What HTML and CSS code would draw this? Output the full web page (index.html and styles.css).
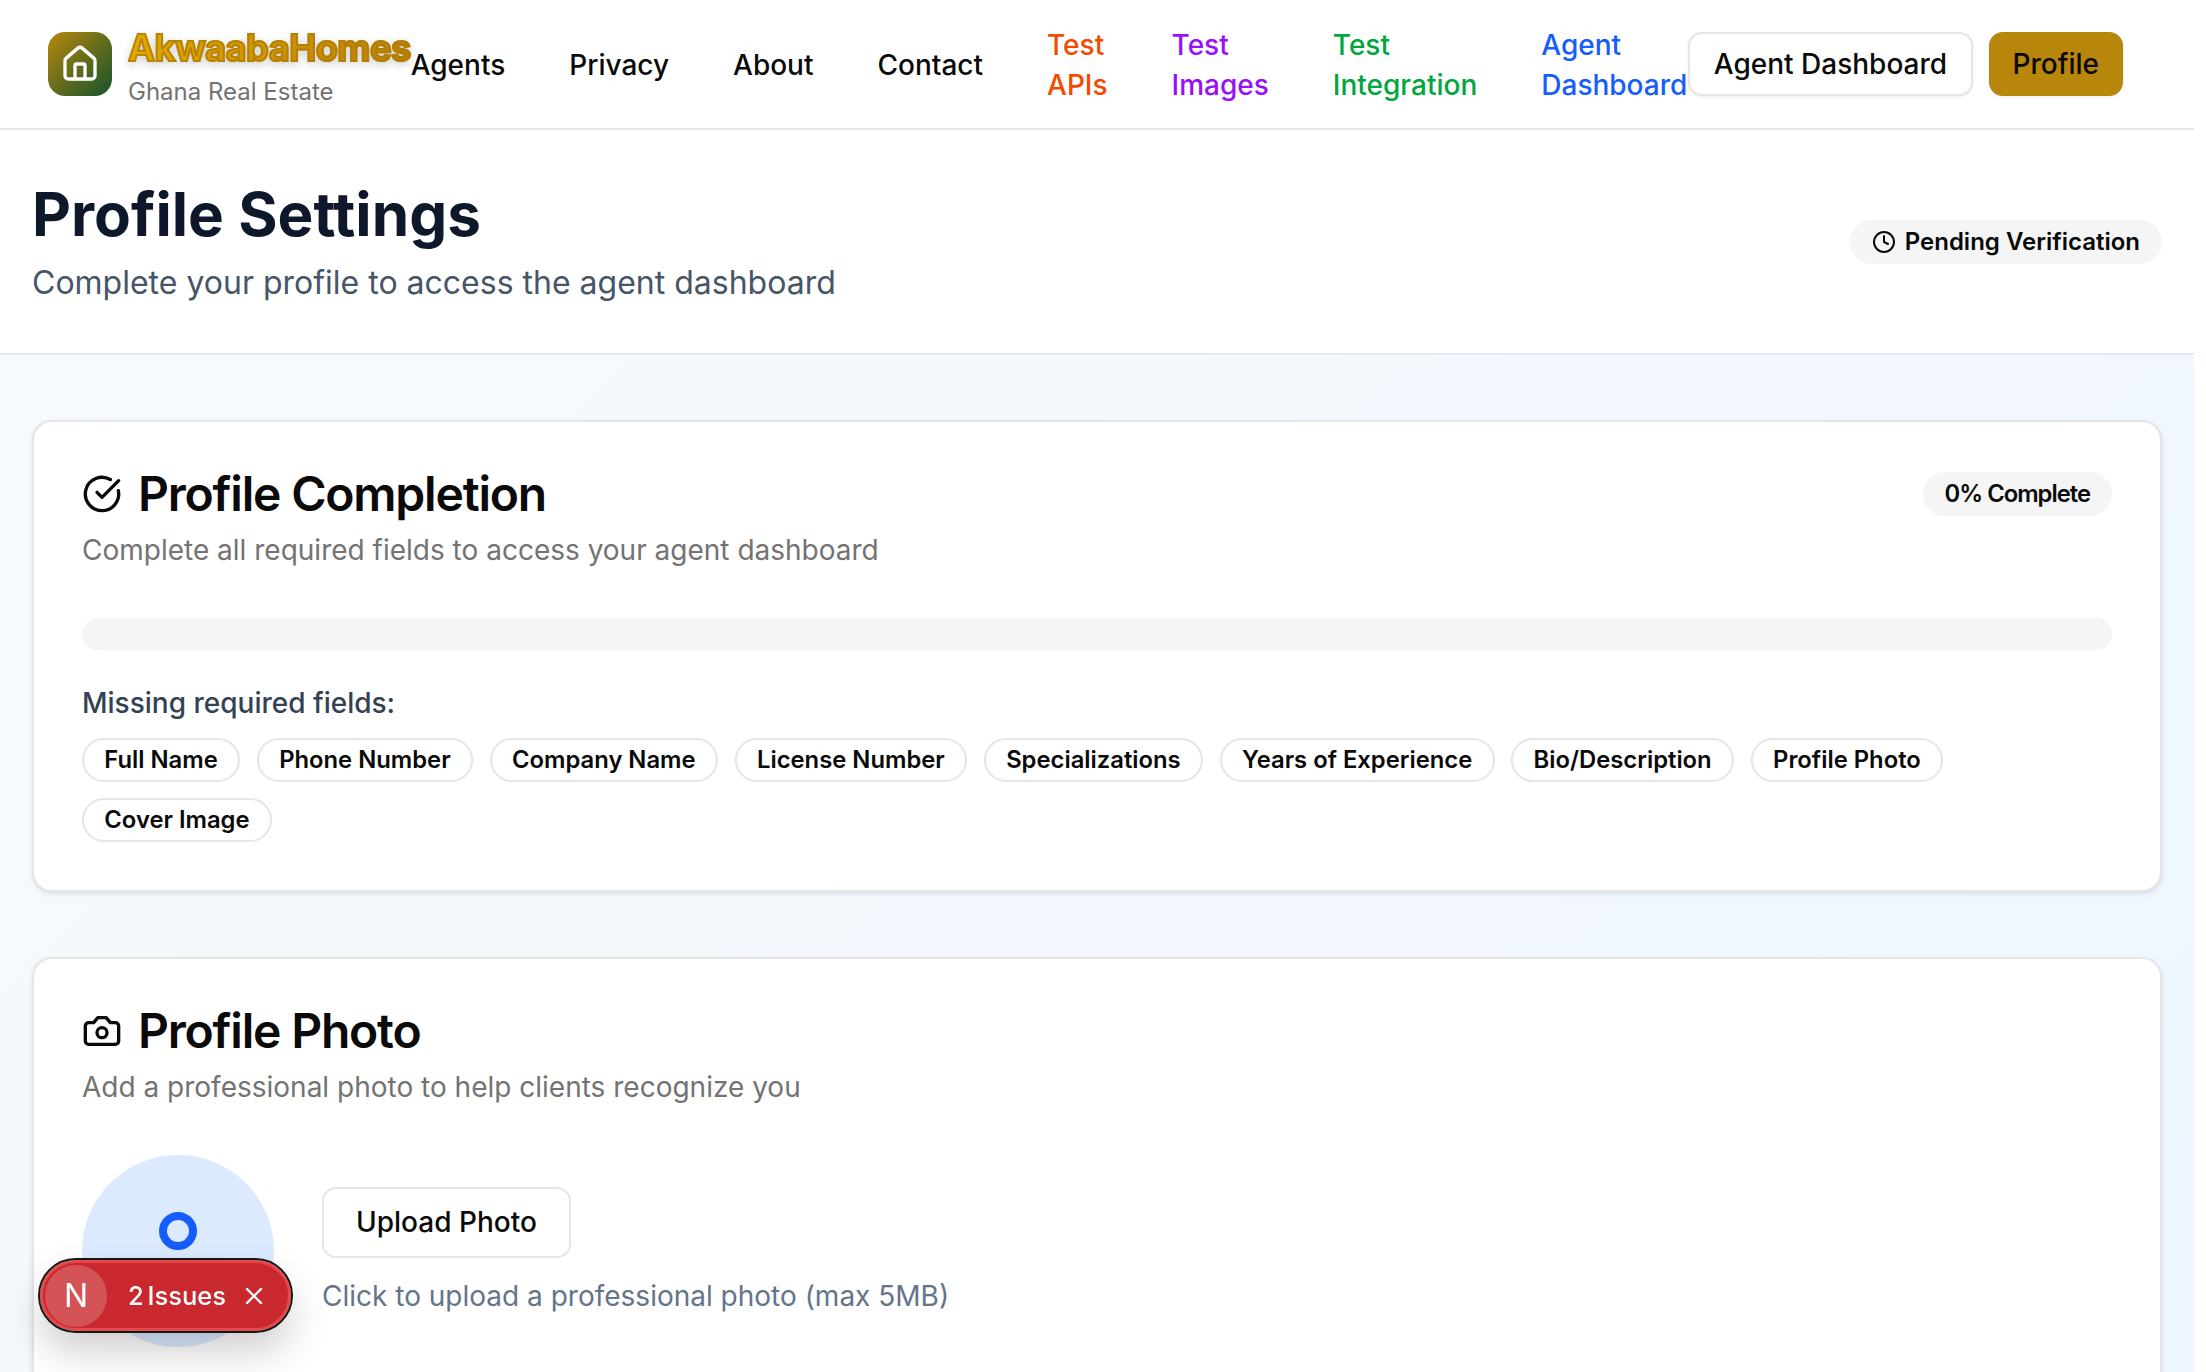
FILE: index.html
```html
<!DOCTYPE html>
<html lang="en">
<head>
    <meta charset="UTF-8">
    <meta name="viewport" content="width=device-width, initial-scale=1.0">
    <title>Profile Settings</title>
    <link rel="stylesheet" href="styles.css">
</head>
<body>
    <header class="site-header">
        <a class="brand" href="#">
            <span class="brand-logo">
                <svg class="icon-house" viewBox="0 0 24 24"><path d="M15 21v-8a1 1 0 0 0-1-1h-4a1 1 0 0 0-1 1v8"/><path d="M3 10a2 2 0 0 1 .709-1.528l7-5.999a2 2 0 0 1 2.582 0l7 5.999A2 2 0 0 1 21 10v9a2 2 0 0 1-2 2H5a2 2 0 0 1-2-2z"/></svg>
            </span>
            <span class="brand-text">
                <span class="brand-name">AkwaabaHomes</span>
                <span class="brand-sub">Ghana Real Estate</span>
            </span>
        </a>
        <nav class="main-nav">
            <a href="#">Agents</a>
            <a href="#">Privacy</a>
            <a href="#">About</a>
            <a href="#">Contact</a>
            <a class="wrap orange" href="#">Test APIs</a>
            <a class="wrap purple" href="#">Test Images</a>
            <a class="wrap green" href="#">Test Integration</a>
            <a class="wrap blue" href="#">Agent Dashboard</a>
        </nav>
        <div class="header-actions">
            <button class="btn btn-outline" type="button">Agent Dashboard</button>
            <button class="btn btn-gold" type="button">Profile</button>
        </div>
    </header>

    <section class="page-head">
        <div>
            <h1>Profile Settings</h1>
            <p>Complete your profile to access the agent dashboard</p>
        </div>
        <span class="status-pill">
            <svg class="icon-clock" viewBox="0 0 24 24"><circle cx="12" cy="12" r="10"/><polyline points="12 6 12 12 16 14"/></svg>
            Pending Verification
        </span>
    </section>

    <main class="content">
        <section class="card">
            <div class="card-top">
                <div>
                    <h2>
                        <svg class="icon-title" viewBox="0 0 24 24"><path d="M21.801 10A10 10 0 1 1 17 3.335"/><path d="m9 11 3 3L22 4"/></svg>
                        Profile Completion
                    </h2>
                    <p class="card-desc">Complete all required fields to access your agent dashboard</p>
                </div>
                <span class="percent-pill">0% Complete</span>
            </div>
            <div class="progress"></div>
            <h3>Missing required fields:</h3>
            <div class="chips">
                <span class="chip">Full Name</span>
                <span class="chip">Phone Number</span>
                <span class="chip">Company Name</span>
                <span class="chip">License Number</span>
                <span class="chip">Specializations</span>
                <span class="chip">Years of Experience</span>
                <span class="chip">Bio/Description</span>
                <span class="chip">Profile Photo</span>
                <span class="chip">Cover Image</span>
            </div>
        </section>

        <section class="card">
            <h2>
                <svg class="icon-title" viewBox="0 0 24 24"><path d="M14.5 4h-5L7 7H4a2 2 0 0 0-2 2v9a2 2 0 0 0 2 2h16a2 2 0 0 0 2-2V9a2 2 0 0 0-2-2h-3l-2.5-3z"/><circle cx="12" cy="13" r="3"/></svg>
                Profile Photo
            </h2>
            <p class="card-desc">Add a professional photo to help clients recognize you</p>
            <div class="photo-row">
                <div class="avatar"><span class="spinner"></span></div>
                <div>
                    <button class="btn btn-upload" type="button">Upload Photo</button>
                    <p class="photo-hint">Click to upload a professional photo (max 5MB)</p>
                </div>
            </div>
        </section>
    </main>

    <div class="issues-badge">
        <span class="issues-logo">N</span>
        <span class="issues-label">2 Issues</span>
        <svg class="icon-x" viewBox="0 0 24 24"><path d="M18 6 6 18"/><path d="m6 6 12 12"/></svg>
    </div>
</body>
</html>
```

FILE: styles.css
```css
html, body {
    height: 100vh;
    overflow: hidden;
}
html {
    background-color: #fff;
}
body {
    /* 12px on the right is the scrollbar track */
    margin: 0 12px 0 0;
    font-family: Inter, "Liberation Sans", sans-serif;
    background: linear-gradient(135deg, #f8fafc, #eff6ff);
    color: #0a0a0a;
}
svg {
    fill: none;
    stroke: currentColor;
    stroke-width: 2;
    stroke-linecap: round;
    stroke-linejoin: round;
    flex-shrink: 0;
}
a {
    text-decoration: none;
    color: inherit;
}
h1, h2, h3, p {
    margin: 0;
}

.site-header {
    display: flex;
    align-items: center;
    height: 128px;
    padding: 0 70px 0 48px;
    background-color: #fff;
    border-bottom: 2px solid #e5e5e5;
}
.brand {
    display: flex;
    align-items: center;
    gap: 16px;
}
.brand-logo {
    display: flex;
    align-items: center;
    justify-content: center;
    width: 64px;
    height: 64px;
    border-radius: 17px;
    background: linear-gradient(135deg, #b8860b, #14532d);
    color: #fff;
}
.icon-house {
    width: 40px;
    height: 40px;
}
.brand-text {
    display: flex;
    flex-direction: column;
    gap: 8px;
    padding-top: 8px;
}
.brand-name {
    font-size: 36.3px;
    line-height: 40px;
    font-weight: 700;
    letter-spacing: -0.6px;
    background: linear-gradient(90deg, #e2a800, #b8800a);
    -webkit-background-clip: text;
    background-clip: text;
    color: transparent;
    -webkit-text-stroke: 2px rgba(176, 124, 0, 0.8);
    filter: drop-shadow(0 3px 4px rgba(0, 0, 0, 0.18));
}
.brand-sub {
    font-size: 24px;
    line-height: 32px;
    color: #737373;
}
.main-nav {
    display: flex;
    align-items: center;
    gap: 64px;
    padding-top: 1px;
    font-size: 28px;
    font-weight: 500;
    line-height: 40px;
}
.main-nav .wrap {
    width: min-content;
}
.orange { color: #f54900; }
.purple { color: #9810fa; }
.green { color: #00a63e; }
.blue { color: #155dfc; }

.header-actions {
    display: flex;
    gap: 16px;
    margin-left: 1px;
}
.btn {
    font-family: inherit;
    font-size: 28px;
    font-weight: 500;
    color: #0a0a0a;
    border-radius: 14px;
    height: 64px;
    padding: 0 24px;
    white-space: nowrap;
    cursor: pointer;
}
.btn-outline {
    padding: 0 23.5px;
    background-color: #fff;
    border: 2px solid #e5e5e5;
    box-shadow: 0 1px 3px rgba(0, 0, 0, 0.08);
}
.btn-gold {
    background-color: #b8860b;
    border: none;
    box-shadow: 0 1px 3px rgba(0, 0, 0, 0.08);
}

.page-head {
    display: flex;
    justify-content: space-between;
    align-items: center;
    height: 223px;
    padding: 0 32px;
    background-color: #fff;
    border-bottom: 2px solid #e2e8f0;
}
.page-head h1 {
    margin-top: 1px;
    font-size: 60.2px;
    line-height: 70px;
    font-weight: 700;
    color: #0f172a;
}
.page-head p {
    margin-top: 11px;
    font-size: 32px;
    line-height: 44px;
    color: #475569;
}
.status-pill {
    display: flex;
    align-items: center;
    gap: 9px;
    height: 44px;
    padding: 0 22px;
    border-radius: 22px;
    background-color: #f5f5f5;
    font-size: 24px;
    font-weight: 600;
}
.icon-clock {
    width: 24px;
    height: 24px;
}

.content {
    display: flex;
    flex-direction: column;
    gap: 65px;
    padding: 65px 32px 0;
}
.card {
    padding: 48px;
    background-color: #fff;
    border: 2px solid #e5e5e5;
    border-radius: 20px;
    box-shadow: 0 2px 5px rgba(0, 0, 0, 0.1);
}
.card-top {
    display: flex;
    justify-content: space-between;
    align-items: flex-start;
}
.card h2 {
    display: flex;
    align-items: center;
    gap: 16px;
    font-size: 48px;
    line-height: 48px;
    font-weight: 600;
    letter-spacing: -1.2px;
}
.icon-title {
    width: 40px;
    height: 40px;
}
.card-desc {
    margin-top: 12px;
    font-size: 28px;
    line-height: 40px;
    color: #737373;
}
.percent-pill {
    margin-top: 2px;
    height: 44px;
    line-height: 44px;
    padding: 0 22px;
    border-radius: 22px;
    background-color: #f5f5f5;
    font-size: 23.8px;
    font-weight: 600;
    letter-spacing: -1px;
}
.progress {
    height: 32px;
    margin-top: 48px;
    border-radius: 16px;
    background-color: #f5f5f5;
}
.card h3 {
    margin-top: 35px;
    font-size: 28px;
    line-height: 36px;
    font-weight: 500;
    color: #334155;
}
.chips {
    display: flex;
    flex-wrap: wrap;
    gap: 16px 16.8px;
    margin-top: 17px;
}
.chip {
    height: 40px;
    line-height: 40px;
    padding: 0 20.3px;
    border: 2px solid #e5e5e5;
    border-radius: 22px;
    font-size: 23.8px;
    font-weight: 600;
}

.photo-row {
    display: flex;
    align-items: center;
    gap: 48px;
    margin-top: 48px;
}
.avatar {
    display: flex;
    align-items: center;
    justify-content: center;
    width: 192px;
    height: 192px;
    border-radius: 50%;
    background-color: #dbeafe;
}
.spinner {
    width: 22px;
    height: 22px;
    border: 8px solid #155dfc;
    border-radius: 50%;
    margin-bottom: 40px;
}
.btn-upload {
    height: 71px;
    padding: 0 32px;
    background-color: #fff;
    border: 2px solid #e5e5e5;
}
.photo-hint {
    margin-top: 18px;
    font-size: 28px;
    line-height: 40px;
    color: #64748b;
}

/* dev overlay, sits above the page */
.issues-badge {
    position: fixed;
    left: 40px;
    bottom: 41px;
    display: flex;
    align-items: center;
    box-sizing: border-box;
    width: 251px;
    height: 71px;
    padding: 0 20px 0 2px;
    border-radius: 36px;
    background-color: #c9292e;
    border: 3px solid #e5484d;
    outline: 2px solid #171717;
    box-shadow: 0 20px 40px rgba(0, 0, 0, 0.2);
    color: #fff;
}
.issues-logo {
    display: flex;
    align-items: center;
    justify-content: center;
    width: 62px;
    height: 62px;
    border-radius: 50%;
    background-color: rgba(255, 255, 255, 0.2);
    font-size: 32px;
}
.issues-label {
    margin-left: 21px;
    font-size: 25.5px;
    font-weight: 500;
    word-spacing: -3px;
    white-space: nowrap;
}
.icon-x {
    width: 28px;
    height: 28px;
    margin-left: auto;
}
```
